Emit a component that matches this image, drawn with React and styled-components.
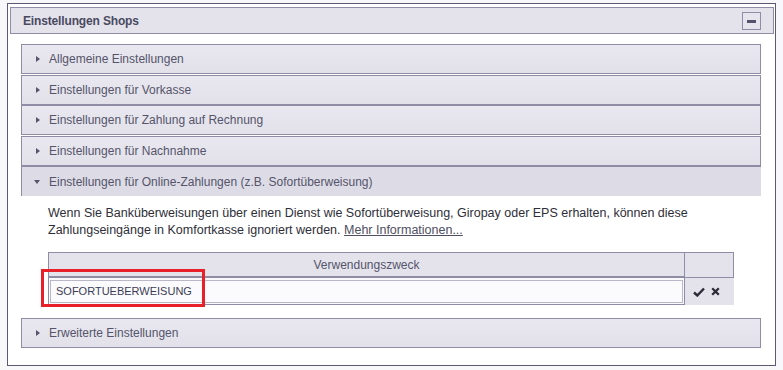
import React from "react";
import styled, { createGlobalStyle } from "styled-components";

const Global = createGlobalStyle`
  html, body { margin: 0; padding: 0; background: #f8f8fa; }
  body { font-family: "Liberation Sans", Arial, sans-serif; }
`;

const Page = styled.div`
  padding: 3px 7px 0 7px;
  width: 769px;
`;

const Panel = styled.section`
  box-sizing: border-box;
  width: 769px;
  height: 363px;
  border: 1px solid #5c5a72;
  background: #fff;
  padding: 3px 1px 0 2px;
`;

const PanelHeader = styled.div`
  box-sizing: border-box;
  height: 27px;
  border: 1px solid #8f8ca5;
  background: #e4e3ec;
  display: flex;
  align-items: center;
  justify-content: space-between;
  padding: 0 12px 0 12px;
`;

const PanelTitle = styled.span`
  font-family: "Liberation Sans", Arial, sans-serif;
  font-size: 12px;
  font-weight: bold;
  letter-spacing: -0.15px;
  color: #4a4960;
`;

const ToggleButton = styled.button`
  box-sizing: border-box;
  width: 19px;
  height: 18px;
  margin-top: 1px;
  border: 1px solid #8f8ca5;
  background: #e6e5ee;
  display: flex;
  align-items: center;
  justify-content: center;
  padding: 0;
  &::after {
    content: "";
    width: 9px;
    height: 3px;
    background: #55536b;
  }
`;

const Accordion = styled.div`
  padding: 10px 13px 0 11px;
  display: flex;
  flex-direction: column;
`;

const Item = styled.div`
  margin-top: ${(p) => p.$gap}px;
`;

const ItemHeader = styled.div`
  box-sizing: border-box;
  height: 30px;
  border: 1px solid #8f8ca5;
  border-bottom: ${(p) => (p.$open ? "none" : "1px solid #8f8ca5")};
  border-right: ${(p) => (p.$open ? "none" : "1px solid #8f8ca5")};
  background: ${(p) =>
    p.$open ? "#dddce6" : "linear-gradient(#e9e8f0, #e2e1ea)"};
  display: flex;
  align-items: center;
  padding-left: ${(p) => (p.$open ? 12 : 14)}px;
  font-family: "Liberation Sans", Arial, sans-serif;
  font-size: 12px;
  color: #55546a;
`;

const Arrow = styled.span`
  width: 0;
  height: 0;
  margin-right: 9px;
  ${(p) =>
    p.$open
      ? `border-left: 3.5px solid transparent; border-right: 3.5px solid transparent; border-top: 4px solid #55546a;`
      : `border-top: 3.5px solid transparent; border-bottom: 3.5px solid transparent; border-left: 4px solid #55546a;`}
`;

const Content = styled.div`
  padding: 9px 26px 13px 27px;
`;

const Text = styled.p`
  margin: 0 0 13px 0;
  font-family: "Liberation Sans", Arial, sans-serif;
  font-size: 12.5px;
  line-height: 17px;
  color: #2e2e38;
`;

const Line = styled.span`
  display: block;
  white-space: nowrap;
`;

const Link = styled.a`
  color: #4f4e62;
  text-decoration: underline;
`;

const TableWrap = styled.div`
  position: relative;
`;

const Table = styled.table`
  border-collapse: collapse;
  width: 686px;
  font-family: "Liberation Sans", Arial, sans-serif;
  font-size: 12px;
`;

const Th = styled.th`
  height: 23px;
  padding: 0;
  border: 1px solid #8f8ca5;
  background: #e4e3ec;
  color: #55546a;
  font-weight: normal;
  text-align: center;
  width: ${(p) => p.$w || "auto"};
`;

const Td = styled.td`
  height: 26px;
  padding: ${(p) => (p.$action ? "0 0 0 8px" : "0 1px 0 1px")};
  background: ${(p) => (p.$action ? "#e4e3ec" : "#f9f9fc")};
  border-left: ${(p) => (p.$action ? "none" : "1px solid #8f8ca5")};
  border-right: ${(p) => (p.$action ? "none" : "1px solid #8f8ca5")};
  border-bottom: ${(p) => (p.$action ? "none" : "1px solid #8f8ca5")};
  border-top: ${(p) => (p.$action ? "none" : "2px solid #8f8ca5")};
`;

const Input = styled.input`
  box-sizing: border-box;
  width: 100%;
  height: 23px;
  border: 1px solid #b9b7c8;
  background: #fbfbfd;
  font-family: "Liberation Sans", Arial, sans-serif;
  font-size: 11px;
  color: #3c3b55;
  padding: 0 5px;
  outline: none;
  display: block;
`;

const Actions = styled.div`
  display: flex;
  align-items: center;
  gap: 6px;
  padding-top: 1px;
`;

const Highlight = styled.div`
  position: absolute;
  left: -7px;
  top: 17px;
  width: 158px;
  height: 32px;
  border: 3px solid #e8202a;
  pointer-events: none;
`;

const CheckIcon = () => (
  <svg width="12" height="10" viewBox="0 0 12 10">
    <path d="M1 5.5 L4.3 8.5 L11 1.5" fill="none" stroke="#2c2b35" strokeWidth="2.4" />
  </svg>
);

const CrossIcon = () => (
  <svg width="9" height="9" viewBox="0 0 9 9">
    <path d="M1.2 1.2 L7.8 7.8 M7.8 1.2 L1.2 7.8" stroke="#2c2b35" strokeWidth="2.3" />
  </svg>
);

const sections = [
  { label: "Allgemeine Einstellungen", gap: 0 },
  { label: "Einstellungen für Vorkasse", gap: 1 },
  { label: "Einstellungen für Zahlung auf Rechnung", gap: 0 },
  { label: "Einstellungen für Nachnahme", gap: 1 },
];

export default function App() {
  return (
    <>
      <Global />
      <Page>
        <Panel>
          <PanelHeader>
            <PanelTitle>Einstellungen Shops</PanelTitle>
            <ToggleButton aria-label="Einklappen" />
          </PanelHeader>
          <Accordion>
            {sections.map((s) => (
              <Item key={s.label} $gap={s.gap}>
                <ItemHeader>
                  <Arrow />
                  {s.label}
                </ItemHeader>
              </Item>
            ))}
            <Item $gap={0}>
              <ItemHeader $open>
                <Arrow $open />
                Einstellungen für Online-Zahlungen (z.B. Sofortüberweisung)
              </ItemHeader>
              <Content>
                <Text>
                  <Line>
                    Wenn Sie Banküberweisungen über einen Dienst wie Sofortüberweisung, Giropay oder EPS erhalten, können diese
                  </Line>
                  <Line>
                    Zahlungseingänge in Komfortkasse ignoriert werden. <Link href="#">Mehr Informationen...</Link>
                  </Line>
                </Text>
                <TableWrap>
                  <Table>
                    <thead>
                      <tr>
                        <Th>Verwendungszweck</Th>
                        <Th $w="48px"></Th>
                      </tr>
                    </thead>
                    <tbody>
                      <tr>
                        <Td>
                          <Input defaultValue="SOFORTUEBERWEISUNG" readOnly />
                        </Td>
                        <Td $action>
                          <Actions>
                            <CheckIcon />
                            <CrossIcon />
                          </Actions>
                        </Td>
                      </tr>
                    </tbody>
                  </Table>
                  <Highlight />
                </TableWrap>
              </Content>
            </Item>
            <Item $gap={0}>
              <ItemHeader>
                <Arrow />
                Erweiterte Einstellungen
              </ItemHeader>
            </Item>
          </Accordion>
        </Panel>
      </Page>
    </>
  );
}
